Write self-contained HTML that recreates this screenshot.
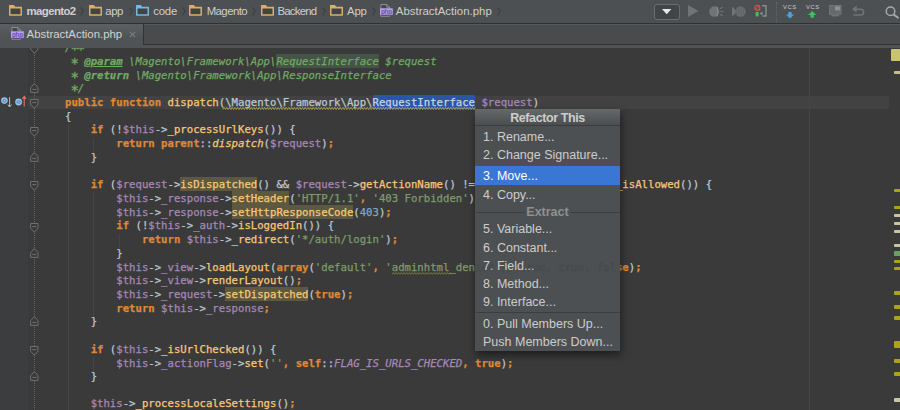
<!DOCTYPE html>
<html><head><meta charset="utf-8"><title>AbstractAction.php</title>
<style>
html,body{margin:0;padding:0}
body{width:900px;height:410px;overflow:hidden;position:relative;background:#3a3a3a;font-family:"Liberation Sans",sans-serif}
svg{position:absolute;overflow:visible}
#nav{z-index:5;position:absolute;left:0;top:0;width:900px;height:23px;background:#4c5052;border-bottom:1px solid #2f3132}
#tabs{z-index:5;position:absolute;left:0;top:24px;width:900px;height:23.8px;background:#505355}
#tab{position:absolute;left:0;top:0;width:143px;height:23.8px;background:linear-gradient(#5d6062,#505355 60%)}
#tabr{position:absolute;left:143.4px;top:0;width:757px;height:19.8px;background:#4a4b4c;border-left:1px solid #303233;border-bottom:1px solid #303233;box-shadow:inset 0 1px 0 #565859}
.navt{position:absolute;top:4px;font-size:11.4px;line-height:14px;color:#cfcfcf;white-space:nowrap}
.chev{position:absolute;top:7px;width:4px;height:9px}
.tabt{position:absolute;top:2.6px;left:26.6px;font-size:11.4px;line-height:14px;color:#d2d2d2;white-space:nowrap}
#ed{position:absolute;left:0;top:47px;width:900px;height:363px;background:#3a3a3a;overflow:hidden}
#gut{position:absolute;left:0;top:0;width:28px;height:363px;background:#3c3d3e}
#cur{position:absolute;left:28px;top:49px;width:861px;height:13.4px;background:#424242}
#margin{position:absolute;left:809px;top:0;width:1px;height:363px;background:#454545}
.ig{position:absolute;width:1px;background:#454545}
.mk{position:absolute;left:894px;width:6px;border-radius:1px 0 0 1px}
.ln{position:absolute;left:39.4px;height:13.714px;line-height:13.714px;white-space:pre;font-family:"DejaVu Sans Mono","Liberation Mono",monospace;font-size:10.65px;color:#bcc8d4;-webkit-text-stroke:0.25px}
.k{color:#df8836;font-weight:bold}
.v{color:#a888b8}
.f{color:#fac878}
.fi{color:#fac878;font-style:italic}
.fh{color:#fac878;background:#5c5940}
.s{color:#7e9c6a}
.su{color:#7e9c6a}
.n{color:#7ea6c8}
.c{color:#70aa62;font-style:italic}
.t{color:#70aa62;font-style:italic;font-weight:bold}
.tu{color:#70aa62;font-style:italic;font-weight:bold;text-decoration:underline}
.chl{color:#70aa62;font-style:italic;background:#455447}
.ast{display:inline-block;width:6.41px;text-align:center;font-size:14px;line-height:0;position:relative;top:3.2px;left:-1px;font-style:normal;color:#70aa62;-webkit-text-stroke:0.35px}
.ci{color:#a888b8;font-style:italic}
.sel{background-color:#2a55a8;color:#c8d4e0}
.fh,.sel,.chl{padding-top:1px;padding-bottom:0}
#pop{z-index:6;position:absolute;left:475px;top:109px;width:145px;height:241.5px;background:#4c5052;box-shadow:1px 4px 8px rgba(0,0,0,.5);font-size:12.5px;color:#cdcdcd}
#poph{position:absolute;left:0;top:0;width:145px;height:15.8px;background:linear-gradient(#666969,#4b4e50);text-align:center;font-weight:bold;line-height:19.2px;color:#cdcdcd;border-bottom:1px solid #3a3c3d;letter-spacing:-0.4px}
.it{position:absolute;left:0;width:145px;height:18.4px;line-height:18.4px;padding-left:8px;box-sizing:border-box;white-space:nowrap}
.it.on{background:#3a76d3;color:#fff}
.sep{position:absolute;height:1px;background:#3b3e40}
</style></head><body>
<div id="nav">
<svg style="left:9px;top:5px" width="13" height="10.8" viewBox="0 0 13 10.8"><path d="M0.75 2.9 L0.75 10.05 L12.25 10.05 L12.25 2.9" fill="#404447" stroke="#dcae6a" stroke-width="1.5" stroke-linejoin="round"/><path d="M0 0.6 Q0 0 0.6 0 L4.9 0 L6.1 1.7 L13 1.7 L13 3.6 L0 3.6 Z" fill="#dcae6a"/></svg>
<span class="navt" style="left:26.6px;letter-spacing:-0.60px;font-weight:bold">magento2</span>
<svg style="left:80.3px;top:7px" width="4" height="8.6" viewBox="0 0 4 8.6"><path d="M0.5 0.3 L3.2 4.3 L0.5 8.3" fill="none" stroke="#3c3f41" stroke-width="1.1"/></svg>
<svg style="left:89px;top:5px" width="13" height="10.8" viewBox="0 0 13 10.8"><path d="M0.75 2.9 L0.75 10.05 L12.25 10.05 L12.25 2.9" fill="#404447" stroke="#dcae6a" stroke-width="1.5" stroke-linejoin="round"/><path d="M0 0.6 Q0 0 0.6 0 L4.9 0 L6.1 1.7 L13 1.7 L13 3.6 L0 3.6 Z" fill="#dcae6a"/></svg>
<span class="navt" style="left:105.3px;letter-spacing:-0.43px">app</span>
<svg style="left:128.8px;top:7px" width="4" height="8.6" viewBox="0 0 4 8.6"><path d="M0.5 0.3 L3.2 4.3 L0.5 8.3" fill="none" stroke="#3c3f41" stroke-width="1.1"/></svg>
<svg style="left:136px;top:5px" width="13" height="10.8" viewBox="0 0 13 10.8"><path d="M0.75 2.9 L0.75 10.05 L12.25 10.05 L12.25 2.9" fill="#404447" stroke="#74b8e4" stroke-width="1.5" stroke-linejoin="round"/><path d="M0 0.6 Q0 0 0.6 0 L4.9 0 L6.1 1.7 L13 1.7 L13 3.6 L0 3.6 Z" fill="#74b8e4"/></svg>
<span class="navt" style="left:153.3px;letter-spacing:-0.25px">code</span>
<svg style="left:181.8px;top:7px" width="4" height="8.6" viewBox="0 0 4 8.6"><path d="M0.5 0.3 L3.2 4.3 L0.5 8.3" fill="none" stroke="#3c3f41" stroke-width="1.1"/></svg>
<svg style="left:189.2px;top:5px" width="13" height="10.8" viewBox="0 0 13 10.8"><path d="M0.75 2.9 L0.75 10.05 L12.25 10.05 L12.25 2.9" fill="#404447" stroke="#dcae6a" stroke-width="1.5" stroke-linejoin="round"/><path d="M0 0.6 Q0 0 0.6 0 L4.9 0 L6.1 1.7 L13 1.7 L13 3.6 L0 3.6 Z" fill="#dcae6a"/></svg>
<span class="navt" style="left:206.7px;letter-spacing:-0.57px">Magento</span>
<svg style="left:251.8px;top:7px" width="4" height="8.6" viewBox="0 0 4 8.6"><path d="M0.5 0.3 L3.2 4.3 L0.5 8.3" fill="none" stroke="#3c3f41" stroke-width="1.1"/></svg>
<svg style="left:260.6px;top:5px" width="13" height="10.8" viewBox="0 0 13 10.8"><path d="M0.75 2.9 L0.75 10.05 L12.25 10.05 L12.25 2.9" fill="#404447" stroke="#dcae6a" stroke-width="1.5" stroke-linejoin="round"/><path d="M0 0.6 Q0 0 0.6 0 L4.9 0 L6.1 1.7 L13 1.7 L13 3.6 L0 3.6 Z" fill="#dcae6a"/></svg>
<span class="navt" style="left:277.5px;letter-spacing:-0.79px">Backend</span>
<svg style="left:321.8px;top:7px" width="4" height="8.6" viewBox="0 0 4 8.6"><path d="M0.5 0.3 L3.2 4.3 L0.5 8.3" fill="none" stroke="#3c3f41" stroke-width="1.1"/></svg>
<svg style="left:330px;top:5px" width="13" height="10.8" viewBox="0 0 13 10.8"><path d="M0.75 2.9 L0.75 10.05 L12.25 10.05 L12.25 2.9" fill="#404447" stroke="#dcae6a" stroke-width="1.5" stroke-linejoin="round"/><path d="M0 0.6 Q0 0 0.6 0 L4.9 0 L6.1 1.7 L13 1.7 L13 3.6 L0 3.6 Z" fill="#dcae6a"/></svg>
<span class="navt" style="left:347px;letter-spacing:-0.20px">App</span>
<svg style="left:371.8px;top:7px" width="4" height="8.6" viewBox="0 0 4 8.6"><path d="M0.5 0.3 L3.2 4.3 L0.5 8.3" fill="none" stroke="#3c3f41" stroke-width="1.1"/></svg>
<svg style="left:379.7px;top:4px" width="13" height="13" viewBox="0 0 13 13"><path d="M0.9 0.5 L6.8 0.5 L9.6 3.3 L9.6 12.3 L0.9 12.3 Z" fill="#45484a" stroke="#929496" stroke-width="0.9"/><path d="M6.8 0.5 L6.8 3.3 L9.6 3.3" fill="none" stroke="#929496" stroke-width="0.9"/><rect x="0" y="4.3" width="12.8" height="6.5" fill="#b9a2ee"/><text x="6.4" y="9.6" font-family="Liberation Sans, sans-serif" font-size="6.4" font-weight="bold" fill="#6a50b4" text-anchor="middle" letter-spacing="-0.3">php</text></svg>
<span class="navt" style="left:395.8px;letter-spacing:0.02px">AbstractAction.php</span>
<svg style="left:497.3px;top:7px" width="4" height="8.6" viewBox="0 0 4 8.6"><path d="M0.5 0.3 L3.2 4.3 L0.5 8.3" fill="none" stroke="#3c3f41" stroke-width="1.1"/></svg>
<div style="position:absolute;left:654px;top:3.5px;width:24px;height:14px;border:1px solid #6a6d6f;border-radius:3px;background:#424547"></div>
<svg style="left:661.5px;top:9px" width="9.4" height="5.2" viewBox="0 0 9.4 5.2"><path d="M0 0 L9.4 0 L4.7 5.2 Z" fill="#e8e8e8"/></svg>
<svg style="left:688px;top:5px" width="10.5" height="12" viewBox="0 0 10.5 12"><path d="M0 0 L10.5 6 L0 12 Z" fill="#717476"/></svg>
<svg style="left:708.5px;top:5.5px" width="15" height="11" viewBox="0 0 15 11"><ellipse cx="5.4" cy="5.5" rx="5.2" ry="5.3" fill="#717476"/><path d="M10.6 2.4 Q12.8 2.6 13.6 1 M11.2 5.5 L14.6 5.5 M10.6 8.6 Q12.8 8.4 13.6 10" stroke="#717476" stroke-width="1.1" fill="none"/><path d="M7.6 0.8 Q10.6 5.5 7.6 10.2" stroke="#8a8d8f" stroke-width="1.1" fill="none"/><path d="M9.6 1.6 Q11.6 5.5 9.6 9.4" stroke="#4c5052" stroke-width="0.8" fill="none"/></svg>
<svg style="left:731.5px;top:5.5px" width="14" height="11" viewBox="0 0 14 11"><path d="M0 0.5 L5.5 5.5 L0 10.5 Z" fill="#717476"/><ellipse cx="8.5" cy="5.5" rx="5.2" ry="5.3" fill="#6b6e70"/><path d="M4 2h9M3.5 4h10M3.5 6h10M4 8h9" stroke="#55585a" stroke-width="0.8" stroke-dasharray="1.2 1.2"/></svg>
<svg style="left:754px;top:5px" width="13" height="12" viewBox="0 0 13 12"><circle cx="3.4" cy="2.9" r="2.5" fill="none" stroke="#e0524a" stroke-width="1.2"/><path d="M1.6 4.7 L5.2 1.1" stroke="#e0524a" stroke-width="1"/><rect x="1.6" y="7" width="3" height="4.4" fill="#3fc060"/><path d="M8 0.8 L12 0.8 L12 11 L8.5 11" fill="none" stroke="#8a8d8f" stroke-width="1.4"/><path d="M5.5 8.5 L8.5 6.5 L8.5 10.5 Z" fill="#8a8d8f"/></svg>
<div style="position:absolute;left:776px;top:2px;width:0;height:20px;border-left:1px dotted #66696b"></div>
<span style="position:absolute;left:783px;top:3.5px;font-size:5.8px;line-height:7px;color:#cccccc;letter-spacing:0.55px">VCS</span>
<svg style="left:786px;top:11.5px" width="8" height="6.5" viewBox="0 0 8 6.5"><path d="M2.4 0 L5.6 0 L5.6 2.6 L8 2.6 L4 6.5 L0 2.6 L2.4 2.6 Z" fill="#4aa4e0"/></svg>
<span style="position:absolute;left:806px;top:3.5px;font-size:5.8px;line-height:7px;color:#cccccc;letter-spacing:0.55px">VCS</span>
<svg style="left:808.3px;top:11.3px" width="8.4" height="6.7" viewBox="0 0 8.4 6.7"><path d="M4.2 0 L8.4 4 L5.9 4 L5.9 6.7 L2.5 6.7 L2.5 4 L0 4 Z" fill="#3cc060"/></svg>
<svg style="left:828.5px;top:5px" width="12.5" height="11.5" viewBox="0 0 12.5 11.5"><rect x="0.6" y="0.6" width="11.3" height="8.6" fill="#66696b" stroke="#717476" stroke-width="1.2"/><rect x="6" y="1.4" width="5" height="4" fill="#8e9193"/><rect x="2.5" y="10" width="7.5" height="1.4" fill="#717476"/></svg>
<svg style="left:851.5px;top:5.3px" width="12.5" height="11" viewBox="0 0 12.5 11"><path d="M3 4.2 L8.5 4.2 Q11.6 4.2 11.6 7.2 Q11.6 10 8.5 10 L1.5 10" fill="none" stroke="#717476" stroke-width="1.6"/><path d="M0 4.2 L4.6 0.6 L4.6 7.8 Z" fill="#717476"/></svg>
<svg style="left:884.5px;top:5.5px" width="15" height="13" viewBox="0 0 15 13"><circle cx="5.5" cy="5.3" r="4.3" fill="none" stroke="#a6a9aa" stroke-width="1.5"/><path d="M8.7 8.6 L13.5 12" stroke="#a6a9aa" stroke-width="1.9"/></svg>
</div>
<div id="tabs"><div id="tab">
<svg style="left:10.7px;top:3px" width="13" height="13" viewBox="0 0 13 13"><path d="M0.9 0.5 L6.8 0.5 L9.6 3.3 L9.6 12.3 L0.9 12.3 Z" fill="#45484a" stroke="#929496" stroke-width="0.9"/><path d="M6.8 0.5 L6.8 3.3 L9.6 3.3" fill="none" stroke="#929496" stroke-width="0.9"/><rect x="0" y="4.3" width="12.8" height="6.5" fill="#b9a2ee"/><text x="6.4" y="9.6" font-family="Liberation Sans, sans-serif" font-size="6.4" font-weight="bold" fill="#6a50b4" text-anchor="middle" letter-spacing="-0.3">php</text></svg>
<span class="tabt">AbstractAction.php</span>
<svg style="left:128.6px;top:6.8px" width="7" height="7" viewBox="0 0 7 7"><path d="M0.8 0.8 L6.2 6.2 M6.2 0.8 L0.8 6.2" stroke="#7a7d7f" stroke-width="1.2" fill="none"/></svg>
</div><div id="tabr"></div></div>
<div id="ed">
<div id="gut"></div>
<div id="cur"></div>
<div id="margin"></div>
<div style="position:absolute;left:34px;top:0.0px;width:0;height:363.0px;border-left:1px dotted #626465"></div>
<svg style="left:30px;top:-2.76px" width="9" height="10" viewBox="0 0 9 10"><path d="M0.6 0.5 L8.0 0.5 L8.0 5.2 L4.3 9.3 L0.6 5.2 Z" fill="#3a3a3a" stroke="#747677" stroke-width="0.9"/><path d="M2.3 3.6 L6.3 3.6" stroke="#747677" stroke-width="0.9"/></svg>
<svg style="left:30px;top:36.29px" width="9" height="10" viewBox="0 0 9 10"><path d="M0.6 9.4 L8.0 9.4 L8.0 4.7 L4.3 0.6 L0.6 4.7 Z" fill="#3a3a3a" stroke="#747677" stroke-width="0.9"/><path d="M2.3 6.4 L6.3 6.4" stroke="#747677" stroke-width="0.9"/></svg>
<svg style="left:30px;top:52.10px" width="9" height="10" viewBox="0 0 9 10"><path d="M0.6 0.5 L8.0 0.5 L8.0 5.2 L4.3 9.3 L0.6 5.2 Z" fill="#3a3a3a" stroke="#747677" stroke-width="0.9"/><path d="M2.3 3.6 L6.3 3.6" stroke="#747677" stroke-width="0.9"/></svg>
<svg style="left:30px;top:79.53px" width="9" height="10" viewBox="0 0 9 10"><path d="M0.6 0.5 L8.0 0.5 L8.0 5.2 L4.3 9.3 L0.6 5.2 Z" fill="#3a3a3a" stroke="#747677" stroke-width="0.9"/><path d="M2.3 3.6 L6.3 3.6" stroke="#747677" stroke-width="0.9"/></svg>
<svg style="left:30px;top:104.86px" width="9" height="10" viewBox="0 0 9 10"><path d="M0.6 9.4 L8.0 9.4 L8.0 4.7 L4.3 0.6 L0.6 4.7 Z" fill="#3a3a3a" stroke="#747677" stroke-width="0.9"/><path d="M2.3 6.4 L6.3 6.4" stroke="#747677" stroke-width="0.9"/></svg>
<svg style="left:30px;top:134.38px" width="9" height="10" viewBox="0 0 9 10"><path d="M0.6 0.5 L8.0 0.5 L8.0 5.2 L4.3 9.3 L0.6 5.2 Z" fill="#3a3a3a" stroke="#747677" stroke-width="0.9"/><path d="M2.3 3.6 L6.3 3.6" stroke="#747677" stroke-width="0.9"/></svg>
<svg style="left:30px;top:175.53px" width="9" height="10" viewBox="0 0 9 10"><path d="M0.6 0.5 L8.0 0.5 L8.0 5.2 L4.3 9.3 L0.6 5.2 Z" fill="#3a3a3a" stroke="#747677" stroke-width="0.9"/><path d="M2.3 3.6 L6.3 3.6" stroke="#747677" stroke-width="0.9"/></svg>
<svg style="left:30px;top:200.85px" width="9" height="10" viewBox="0 0 9 10"><path d="M0.6 9.4 L8.0 9.4 L8.0 4.7 L4.3 0.6 L0.6 4.7 Z" fill="#3a3a3a" stroke="#747677" stroke-width="0.9"/><path d="M2.3 6.4 L6.3 6.4" stroke="#747677" stroke-width="0.9"/></svg>
<svg style="left:30px;top:269.42px" width="9" height="10" viewBox="0 0 9 10"><path d="M0.6 9.4 L8.0 9.4 L8.0 4.7 L4.3 0.6 L0.6 4.7 Z" fill="#3a3a3a" stroke="#747677" stroke-width="0.9"/><path d="M2.3 6.4 L6.3 6.4" stroke="#747677" stroke-width="0.9"/></svg>
<svg style="left:30px;top:298.95px" width="9" height="10" viewBox="0 0 9 10"><path d="M0.6 0.5 L8.0 0.5 L8.0 5.2 L4.3 9.3 L0.6 5.2 Z" fill="#3a3a3a" stroke="#747677" stroke-width="0.9"/><path d="M2.3 3.6 L6.3 3.6" stroke="#747677" stroke-width="0.9"/></svg>
<svg style="left:30px;top:324.28px" width="9" height="10" viewBox="0 0 9 10"><path d="M0.6 9.4 L8.0 9.4 L8.0 4.7 L4.3 0.6 L0.6 4.7 Z" fill="#3a3a3a" stroke="#747677" stroke-width="0.9"/><path d="M2.3 6.4 L6.3 6.4" stroke="#747677" stroke-width="0.9"/></svg>
<div class="ig" style="left:67.5px;top:76.8px;height:301.7px"></div>
<div class="ig" style="left:93px;top:90.5px;height:13.7px"></div>
<div class="ig" style="left:93px;top:145.4px;height:123.4px"></div>
<div class="ig" style="left:93px;top:310.0px;height:13.7px"></div>
<div class="ig" style="left:118.7px;top:186.5px;height:13.7px"></div>
<svg style="left:1px;top:49.8px" width="11" height="11" viewBox="0 0 11 11"><circle cx="3.4" cy="3.6" r="3.3" fill="#84c8ec"/><circle cx="3.4" cy="3.7" r="1.5" fill="none" stroke="#8a5ab0" stroke-width="0.9"/><path d="M8.6 0 L8.6 9.5 M6.8 7.6 L8.6 10 L10.4 7.6" fill="none" stroke="#b8b8b8" stroke-width="1"/></svg>
<svg style="left:14.8px;top:49.3px" width="12" height="11" viewBox="0 0 12 11"><circle cx="3.6" cy="6" r="3.4" fill="#84c8ec"/><ellipse cx="3.6" cy="6" rx="1.7" ry="1.2" fill="none" stroke="#8a5ab0" stroke-width="0.9"/><path d="M9.2 10.5 L9.2 1 M7.3 3 L9.2 0.4 L11.1 3" fill="none" stroke="#ee7660" stroke-width="1.1"/></svg>
<div class="mk" style="left:891px;width:9px;top:2px;height:12px;background:#c8c474"></div>
<div class="mk" style="left:894px;width:6px;top:24px;height:3px;background:#c8c080"></div>
<div class="mk" style="left:894px;width:6px;top:142px;height:3px;background:#aca414"></div>
<div class="mk" style="left:894px;width:6px;top:159px;height:3px;background:#aca414"></div>
<div class="mk" style="left:894px;width:6px;top:167px;height:3px;background:#c6c6a2"></div>
<div class="mk" style="left:894px;width:6px;top:175px;height:3px;background:#c6c6a2"></div>
<div class="mk" style="left:894px;width:6px;top:183px;height:3px;background:#c6c6a2"></div>
<div class="mk" style="left:894px;width:6px;top:197px;height:3px;background:#c6c6a2"></div>
<div class="mk" style="left:894px;width:6px;top:204px;height:5px;background:#6aa062"></div>
<div class="mk" style="left:894px;width:6px;top:212.5px;height:3.5px;background:#aca414"></div>
<div class="mk" style="left:894px;width:6px;top:220px;height:3px;background:#aca414"></div>
<div class="mk" style="left:894px;width:6px;top:244px;height:3.5px;background:#aca414"></div>
<div class="mk" style="left:894px;width:6px;top:258px;height:3.5px;background:#aca414"></div>
<div class="mk" style="left:894px;width:6px;top:269px;height:4px;background:#aca414"></div>
<div class="mk" style="left:894px;width:6px;top:294px;height:7px;background:#aca414"></div>
<div class="mk" style="left:894px;width:6px;top:312px;height:3.5px;background:#aca414"></div>
<div class="mk" style="left:894px;width:6px;top:325px;height:4px;background:#aca414"></div>
<div class="mk" style="left:894px;width:6px;top:351px;height:4px;background:#c6c6a2"></div>
</div>
<div id="code">
<div class="ln" style="top:40.96px"><span class="c">    /</span><span class="ast">*</span><span class="ast">*</span></div>
<div class="ln" style="top:54.96px"><span class="c">     </span><span class="ast">*</span><span class="c"> </span><span class="tu">@param</span><span class="c"> \Magento\Framework\App\</span><span class="chl">RequestInterface</span><span class="c"> $request</span></div>
<div class="ln" style="top:68.96px"><span class="c">     </span><span class="ast">*</span><span class="c"> </span><span class="t">@return</span><span class="c"> \Magento\Framework\App\ResponseInterface</span></div>
<div class="ln" style="top:81.96px"><span class="c">     </span><span class="ast">*</span><span class="c">/</span></div>
<div class="ln" style="top:95.96px"><span class="d">    </span><span class="k">public function </span><span class="f">dispatch</span><span class="d">(</span><span class="w">\Magento\Framework\App\</span><span class="sel">RequestInterface</span><span class="d"> </span><span class="v">$request</span><span class="d">)</span></div>
<div class="ln" style="top:109.96px"><span class="d">    {</span></div>
<div class="ln" style="top:122.96px"><span class="d">        </span><span class="k">if</span><span class="d"> (!</span><span class="v">$this</span><span class="d">-&gt;</span><span class="f">_processUrlKeys</span><span class="d">()) {</span></div>
<div class="ln" style="top:136.96px"><span class="d">            </span><span class="k">return parent</span><span class="d">::</span><span class="fi">dispatch</span><span class="d">(</span><span class="v">$request</span><span class="d">)</span><span class="k">;</span></div>
<div class="ln" style="top:150.96px"><span class="d">        }</span></div>
<div class="ln" style="top:177.96px"><span class="d">        </span><span class="k">if</span><span class="d"> (</span><span class="v">$request</span><span class="d">-&gt;</span><span class="fh">isDispatched</span><span class="d">() &amp;&amp; </span><span class="v">$request</span><span class="d">-&gt;</span><span class="f">getActionName</span><span class="d">() !== </span><span class="s">'denied'</span><span class="d"> &amp;&amp; !</span><span class="v">$this</span><span class="d">-&gt;</span><span class="f">_isAllowed</span><span class="d">()) {</span></div>
<div class="ln" style="top:191.96px"><span class="d">            </span><span class="v">$this</span><span class="d">-&gt;</span><span class="v">_response</span><span class="d">-&gt;</span><span class="fh">setHeader</span><span class="d">(</span><span class="s">'HTTP/1.1'</span><span class="k">,</span><span class="d"> </span><span class="s">'403 Forbidden'</span><span class="d">)</span><span class="k">;</span></div>
<div class="ln" style="top:205.96px"><span class="d">            </span><span class="v">$this</span><span class="d">-&gt;</span><span class="v">_response</span><span class="d">-&gt;</span><span class="fh">setHttpResponseCode</span><span class="d">(</span><span class="n">403</span><span class="d">)</span><span class="k">;</span></div>
<div class="ln" style="top:218.96px"><span class="d">            </span><span class="k">if</span><span class="d"> (!</span><span class="v">$this</span><span class="d">-&gt;</span><span class="v">_auth</span><span class="d">-&gt;</span><span class="f">isLoggedIn</span><span class="d">()) {</span></div>
<div class="ln" style="top:232.96px"><span class="d">                </span><span class="k">return </span><span class="v">$this</span><span class="d">-&gt;</span><span class="f">_redirect</span><span class="d">(</span><span class="s">'*/auth/login'</span><span class="d">)</span><span class="k">;</span></div>
<div class="ln" style="top:246.96px"><span class="d">            }</span></div>
<div class="ln" style="top:260.96px"><span class="d">            </span><span class="v">$this</span><span class="d">-&gt;</span><span class="v">_view</span><span class="d">-&gt;</span><span class="f">loadLayout</span><span class="d">(</span><span class="k">array</span><span class="d">(</span><span class="s">'default'</span><span class="k">,</span><span class="d"> </span><span class="s">'</span><span class="su">adminhtml</span><span class="s">_denied'</span><span class="d">)</span><span class="k">,</span><span class="d"> </span><span class="k">true</span><span class="k">,</span><span class="d"> </span><span class="k">true</span><span class="k">,</span><span class="d"> </span><span class="k">false</span><span class="d">)</span><span class="k">;</span></div>
<div class="ln" style="top:273.96px"><span class="d">            </span><span class="v">$this</span><span class="d">-&gt;</span><span class="v">_view</span><span class="d">-&gt;</span><span class="f">renderLayout</span><span class="d">()</span><span class="k">;</span></div>
<div class="ln" style="top:287.96px"><span class="d">            </span><span class="v">$this</span><span class="d">-&gt;</span><span class="v">_request</span><span class="d">-&gt;</span><span class="fh">setDispatched</span><span class="d">(</span><span class="k">true</span><span class="d">)</span><span class="k">;</span></div>
<div class="ln" style="top:301.96px"><span class="d">            </span><span class="k">return </span><span class="v">$this</span><span class="d">-&gt;</span><span class="v">_response</span><span class="k">;</span></div>
<div class="ln" style="top:314.96px"><span class="d">        }</span></div>
<div class="ln" style="top:342.96px"><span class="d">        </span><span class="k">if</span><span class="d"> (</span><span class="v">$this</span><span class="d">-&gt;</span><span class="f">_isUrlChecked</span><span class="d">()) {</span></div>
<div class="ln" style="top:356.96px"><span class="d">            </span><span class="v">$this</span><span class="d">-&gt;</span><span class="v">_actionFlag</span><span class="d">-&gt;</span><span class="f">set</span><span class="d">(</span><span class="s">''</span><span class="k">,</span><span class="d"> </span><span class="k">self</span><span class="d">::</span><span class="ci">FLAG_IS_URLS_CHECKED</span><span class="k">,</span><span class="d"> </span><span class="k">true</span><span class="d">)</span><span class="k">;</span></div>
<div class="ln" style="top:369.96px"><span class="d">        }</span></div>
<div class="ln" style="top:396.96px"><span class="d">        </span><span class="v">$this</span><span class="d">-&gt;</span><span class="f">_processLocaleSettings</span><span class="d">()</span><span class="k">;</span></div>
<svg style="left:0;top:0" width="900" height="410"><polyline points="222.79,109.5 224.14,107.4 225.49,109.5 226.84,107.4 228.19,109.5 229.54,107.4 230.89,109.5 232.24,107.4 233.59,109.5 234.94,107.4 236.29,109.5 237.64,107.4 238.99,109.5 240.34,107.4 241.69,109.5 243.04,107.4 244.39,109.5 245.74,107.4 247.09,109.5 248.44,107.4 249.79,109.5 251.14,107.4 252.49,109.5 253.84,107.4 255.19,109.5 256.54,107.4 257.89,109.5 259.24,107.4 260.59,109.5 261.94,107.4 263.29,109.5 264.64,107.4 265.99,109.5 267.34,107.4 268.69,109.5 270.04,107.4 271.39,109.5 272.74,107.4 274.09,109.5 275.44,107.4 276.79,109.5 278.14,107.4 279.49,109.5 280.84,107.4 282.19,109.5 283.54,107.4 284.89,109.5 286.24,107.4 287.59,109.5 288.94,107.4 290.29,109.5 291.64,107.4 292.99,109.5 294.34,107.4 295.69,109.5 297.04,107.4 298.39,109.5 299.74,107.4 301.09,109.5 302.44,107.4 303.79,109.5 305.14,107.4 306.49,109.5 307.84,107.4 309.19,109.5 310.54,107.4 311.89,109.5 313.24,107.4 314.59,109.5 315.94,107.4 317.29,109.5 318.64,107.4 319.99,109.5 321.34,107.4 322.69,109.5 324.04,107.4 325.39,109.5 326.74,107.4 328.09,109.5 329.44,107.4 330.79,109.5 332.14,107.4 333.49,109.5 334.84,107.4 336.19,109.5 337.54,107.4 338.89,109.5 340.24,107.4 341.59,109.5 342.94,107.4 344.29,109.5 345.64,107.4 346.99,109.5 348.34,107.4 349.69,109.5 351.04,107.4 352.39,109.5 353.74,107.4 355.09,109.5 356.44,107.4 357.79,109.5 359.14,107.4 360.49,109.5 361.84,107.4 363.19,109.5 364.54,107.4 365.89,109.5 367.24,107.4 368.59,109.5 369.94,107.4 371.29,109.5 372.64,107.4 373.99,109.5 375.34,107.4 376.69,109.5 378.04,107.4 379.39,109.5 380.74,107.4 382.09,109.5 383.44,107.4 384.79,109.5 386.14,107.4 387.49,109.5 388.84,107.4 390.19,109.5 391.54,107.4 392.89,109.5 394.24,107.4 395.59,109.5 396.94,107.4 398.29,109.5 399.64,107.4 400.99,109.5 402.34,107.4 403.69,109.5 405.04,107.4 406.39,109.5 407.74,107.4 409.09,109.5 410.44,107.4 411.79,109.5 413.14,107.4 414.49,109.5 415.84,107.4 417.19,109.5 418.54,107.4 419.89,109.5 421.24,107.4 422.59,109.5 423.94,107.4 425.29,109.5 426.64,107.4 427.99,109.5 429.34,107.4 430.69,109.5 432.04,107.4 433.39,109.5 434.74,107.4 436.09,109.5 437.44,107.4 438.79,109.5 440.14,107.4 441.49,109.5 442.84,107.4 444.19,109.5 445.54,107.4 446.89,109.5 448.24,107.4 449.59,109.5 450.94,107.4 452.29,109.5 453.64,107.4 454.99,109.5 456.34,107.4 457.69,109.5 459.04,107.4 460.39,109.5 461.74,107.4 463.09,109.5 464.44,107.4 465.79,109.5 467.14,107.4 468.49,109.5 469.84,107.4 471.19,109.5 472.54,107.4 473.89,109.5 475.24,107.4" fill="none" stroke="#bdb25a" stroke-width="0.8"/><polyline points="391.95,274.3 393.30,272.6 394.65,274.3 396.00,272.6 397.35,274.3 398.70,272.6 400.05,274.3 401.40,272.6 402.75,274.3 404.10,272.6 405.45,274.3 406.80,272.6 408.15,274.3 409.50,272.6 410.85,274.3 412.20,272.6 413.55,274.3 414.90,272.6 416.25,274.3 417.60,272.6 418.95,274.3 420.30,272.6 421.65,274.3 423.00,272.6 424.35,274.3 425.70,272.6 427.05,274.3 428.40,272.6 429.75,274.3 431.10,272.6 432.45,274.3 433.80,272.6 435.15,274.3 436.50,272.6 437.85,274.3 439.20,272.6 440.55,274.3 441.90,272.6 443.25,274.3 444.60,272.6 445.95,274.3 447.30,272.6 448.65,274.3 450.00,272.6 451.35,274.3" fill="none" stroke="#8e9048" stroke-width="0.7"/></svg>
</div>
<div id="pop">
<div class="ln" style="left:-435.6px;top:152px;opacity:.22;color:#33373a;-webkit-text-stroke:0.4px">                                                                    ied'), true, true, fal</div>
<div id="poph">Refactor This</div>
<div class="it" style="top:19px">1. Rename...</div>
<div class="it" style="top:37px">2. Change Signature...</div>
<div class="it on" style="top:57px;height:19px;line-height:21.4px">3. Move...</div>
<div class="it" style="top:76.6px">4. Copy...</div>
<div class="sep" style="top:103px;left:1px;width:49px"></div>
<div class="sep" style="top:103px;left:96px;width:49px"></div>
<div class="it" style="top:93.5px;text-align:center;padding:0;font-weight:bold;color:#8e9192;letter-spacing:0px">Extract</div>
<div class="it" style="top:111px">5. Variable...</div>
<div class="it" style="top:129.8px">6. Constant...</div>
<div class="it" style="top:147.6px">7. Field...</div>
<div class="it" style="top:165.9px">8. Method...</div>
<div class="it" style="top:184.4px">9. Interface...</div>
<div class="sep" style="top:203px;left:1px;width:144px"></div>
<div class="it" style="top:205.9px">0. Pull Members Up...</div>
<div class="it" style="top:223.5px">Push Members Down...</div>
</div>
</body></html>
